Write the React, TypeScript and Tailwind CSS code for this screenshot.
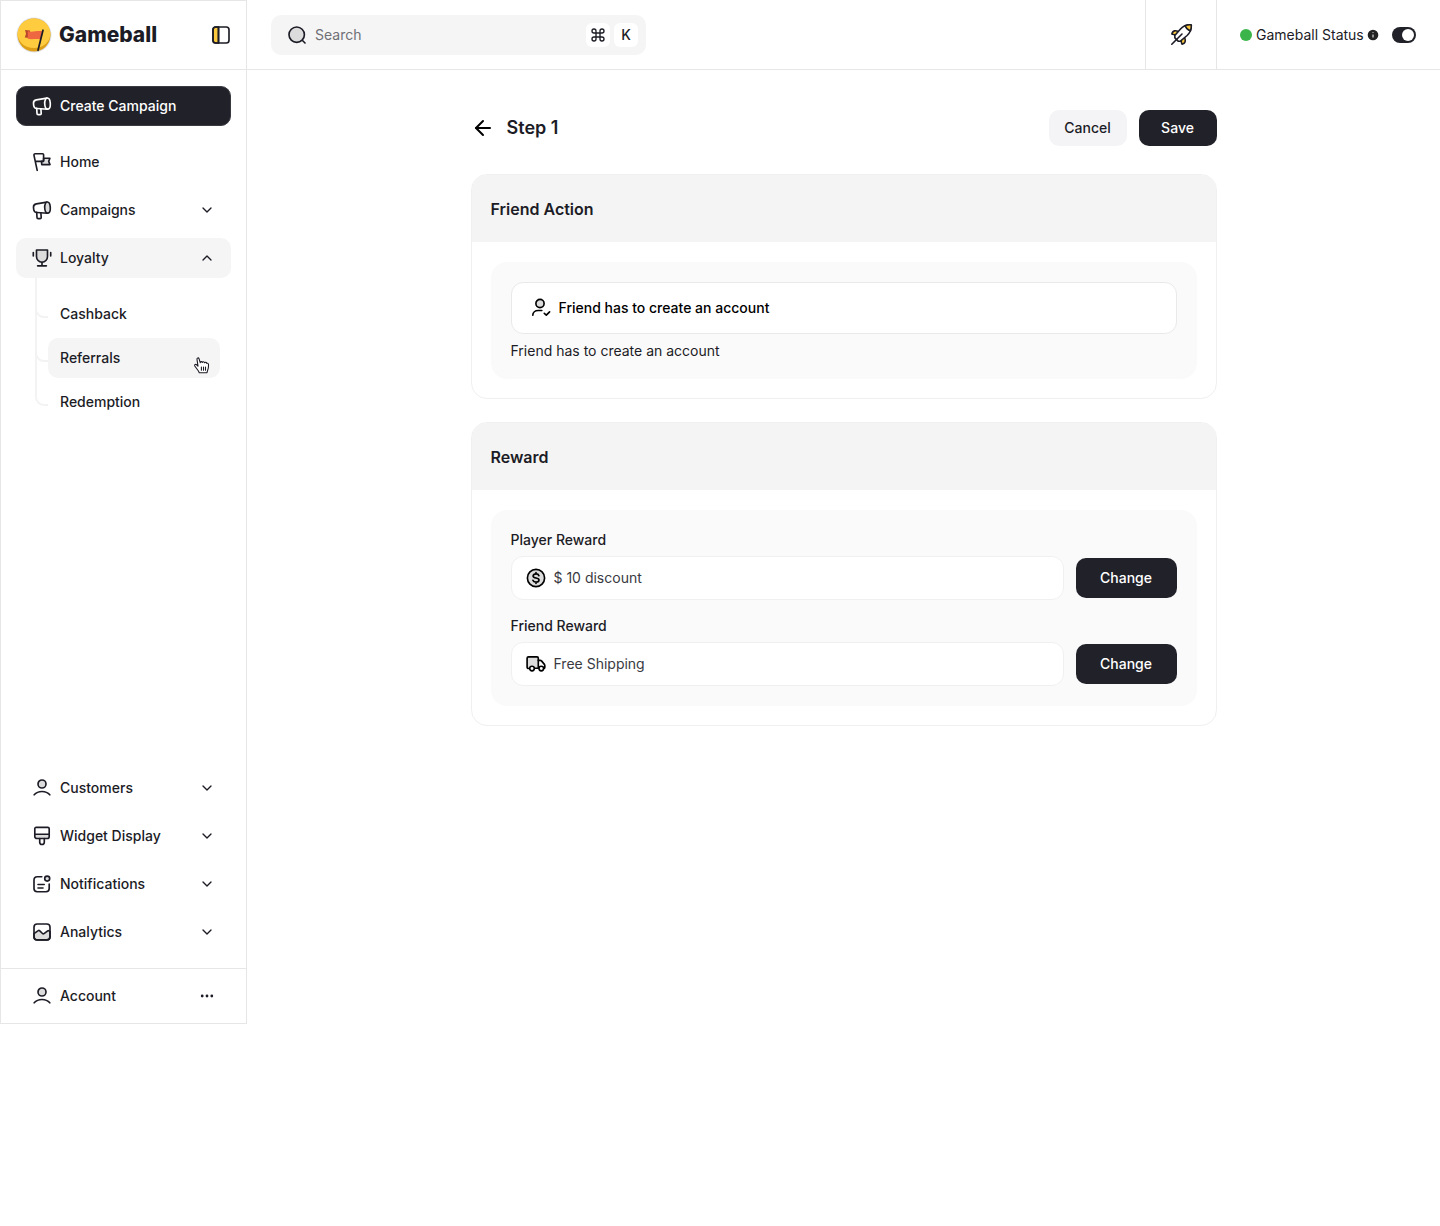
import type { ReactNode } from "react";
import { ArrowLeft, ChevronDown, ChevronUp, Command } from "lucide-react";

type IconProps = { children: ReactNode };

const Icon = ({ children }: IconProps) => (
  <svg
    viewBox="0 0 20 20"
    className="size-5 shrink-0"
    fill="none"
    stroke="currentColor"
    strokeWidth="1.65"
    strokeLinecap="round"
    strokeLinejoin="round"
    aria-hidden="true"
  >
    {children}
  </svg>
);

const MegaphoneIcon = ({ dark = false }: { dark?: boolean }) => (
  <Icon>
    <path d="M4.7 12.400l.3 5.100c0 .7.500 1.100 1.200 1.100h1.900c.7 0 1.100-.5 1.100-1.200l-.3-4.400" />
    <path d="M14.900 2.100L4.400 3.900C2.300 4.300 1.300 5.700 1.500 7.600l.2 1.900c.2 1.900 1.400 2.900 3.300 3l10.600.7" />
    <ellipse
      cx="15.500"
      cy="7.600"
      rx="2.800"
      ry="5.600"
      transform="rotate(-3 15.500 7.600)"
      fill={dark ? "none" : "#dcdcdd"}
    />
  </Icon>
);

const FlagIcon = () => (
  <Icon>
    <path d="M11.600 6.200h6.300l-1.200 3.200 1.300 3.200H9.800l-.4-3.300h2.200z" fill="#dcdcdd" />
    <path d="M5.200 18.300L2 3.400c-.2-1 .3-1.700 1.300-1.700h7.300c.6 0 1 .4 1 1v5.600c0 .6-.4 1-1 1H3.400" />
  </Icon>
);

const TrophyIcon = () => (
  <Icon>
    <path d="M4.500 2h11v6.400c0 3.300-2.400 5.800-5.500 5.800S4.500 11.700 4.500 8.400z" fill="#dcdcdd" />
    <path d="M10 14.200v3.600M5.600 17.800h8.800M1.300 4.500V8M18.700 4.500V8" />
  </Icon>
);

const UserIcon = () => (
  <Icon>
    <circle cx="10" cy="6" r="4" fill="#dcdcdd" />
    <path d="M2.200 16.800c1.900-2.200 4.700-3.300 7.800-3.300s5.900 1.100 7.800 3.300" />
  </Icon>
);

const BrushIcon = () => (
  <Icon>
    <path d="M2.800 8.200h14.400v2.200c0 1.200-.9 2.100-2 2.100H4.800c-1.100 0-2-.9-2-2.100z" fill="#dcdcdd" />
    <path d="M2.800 8.200V2.800c0-.9.500-1.400 1.400-1.400h11.600c.9 0 1.400.5 1.400 1.400v5.400" />
    <path d="M7.700 12.500v3.700a2.300 2.300 0 0 0 4.600 0v-3.700" />
  </Icon>
);

const NotificationIcon = () => (
  <Icon>
    <path d="M9.800 2.700H5.200C3.200 2.700 2 3.900 2 5.900v8.600c0 2 1.200 3.200 3.200 3.200h8.800c2 0 3.200-1.200 3.200-3.200V10" />
    <path d="M6 10.500h6.200M6 14h5" />
    <circle cx="15.200" cy="4.600" r="2.500" fill="#dcdcdd" />
  </Icon>
);

const ChartIcon = () => (
  <Icon>
    <path
      d="M2 11.600l4.200-3c.5-.4.900-.4 1.300 0l3 2.900c.5.500.9.500 1.500.1l3.700-2.800c.4-.3.800-.3 1.200 0l1.100.9v5c0 2-1.200 3.200-3.200 3.200H5.200C3.200 17.900 2 16.700 2 14.700z"
      fill="#dcdcdd"
    />
    <rect x="2" y="2" width="16" height="16" rx="3.200" />
  </Icon>
);

const UserCheckIcon = () => (
  <Icon>
    <circle cx="9" cy="5.500" r="4.100" fill="#dcdcdd" />
    <path d="M1.800 17.200c0-2.900 2.400-4.700 5.400-4.700h3.600M13.300 15.400l2 1.700 3.300-3.300" />
  </Icon>
);

const CoinIcon = () => (
  <Icon>
    <circle cx="10" cy="10" r="8.600" fill="#dcdcdd" />
    <path d="M12.900 7.600C12.500 6.500 11.500 5.900 10 5.900c-1.700 0-2.900.8-2.900 2.100 0 2.900 5.900 1.200 5.900 4 0 1.300-1.200 2.100-3 2.100-1.600 0-2.700-.6-3.100-1.800M10 4.600v1.300M10 14.100v1.300" />
  </Icon>
);

const TruckIcon = () => (
  <Icon>
    <path d="M2.600 14.500c-1 0-1.500-.5-1.500-1.500V4.300c0-1 .5-1.500 1.500-1.500H11c.9 0 1.300.5 1.300 1.400v10H8.500" fill="#dcdcdd" />
    <path d="M12.300 6.300h1.900c.6 0 1 .2 1.300.6l2.900 3.500c.3.400.4.700.4 1.200v1.900c0 .6-.3 1-.9 1" />
    <circle cx="6" cy="14.500" r="2.300" fill="#fff" />
    <circle cx="15.300" cy="14.500" r="2.300" fill="#fff" />
  </Icon>
);

const LogoMark = () => (
  <svg viewBox="0 0 36 36" className="size-9 shrink-0" aria-hidden="true">
    <circle cx="18" cy="18" r="17.500" fill="#dfe2e8" />
    <circle cx="18" cy="18" r="16.500" fill="#dd9f18" />
    <path d="M1.500 16.500C2 8 9 1.500 18 1.500S34 8 34.500 16.500C34.500 25 27 31 18 31S1.500 25 1.500 16.500z" fill="#ffcb3f" />
    <path d="M9 13l5 .6v7.400l-5.200-.5 1.200-3.700z" fill="#b9472c" />
    <path d="M11.800 14.300c5 1.200 9-.9 14.800 0l-2.300 8c-4.700-.9-8 .4-12.500-.5z" fill="#ee6741" />
    <path d="M27 13.200L22 33.300" stroke="#1c1c26" strokeWidth="1.700" strokeLinecap="round" />
  </svg>
);

const RocketIcon = () => (
  <svg
    viewBox="0 0 24 24"
    className="size-6"
    fill="none"
    stroke="#1c1c26"
    strokeWidth="1.600"
    strokeLinecap="round"
    strokeLinejoin="round"
    aria-hidden="true"
  >
    <path d="M8.800 8.200C6.300 7.200 4 7.600 3 10.300c-.2.600 0 .9.600 1l3 .7" fill="#fbc93d" />
    <path d="M15.800 15.200c1 2.500.6 4.800-2.100 5.800-.6.200-.9 0-1-.6l-.7-3" fill="#fbc93d" />
    <path d="M5.800 12.600L11.500 6c3-3.200 6-4.400 10.200-4.200.4 0 .6.200.6.600.2 4.200-1 7.100-4.200 10.100L11.400 18.200l-2.300-.1-3.200-3.200z" fill="#fff" />
    <path d="M16.200 2.700c1.700-.7 3.400-1 5.500-.9.400 0 .6.200.6.600.1 2.100-.2 3.800-.9 5.500-2.300-.8-4.400-2.900-5.200-5.200z" fill="#fbc93d" />
    <path d="M13 11L2.800 21.200" />
  </svg>
);

const PanelIcon = () => (
  <Icon>
    <path d="M7.500 2H4.700C3 2 2 3 2 4.700v10.600C2 17 3 18 4.700 18h2.800z" fill="#fbc93d" />
    <rect x="2" y="2" width="16" height="16" rx="2.700" />
    <path d="M7.500 2v16" />
  </Icon>
);

const HandCursor = () => (
  <svg
    viewBox="0 0 18 20"
    className="absolute right-[9px] top-[17px] h-5 w-[18px]"
    fill="#fff"
    stroke="#1c1c26"
    strokeWidth="1.100"
    strokeLinejoin="round"
    strokeLinecap="round"
    aria-hidden="true"
  >
    <path d="M6.300 17.800c-.4-1.600-1.600-2.900-2.600-4.200-.8-1.100-1.500-2-2-2.900-.4-.9.500-1.600 1.500-1.100.7.400 1.200 1 1.800 1.600L4 4.300c-.3-1.500 1.600-2 2.100-.5l1.200 4c-.1-1.400 1.700-1.600 2.100-.3.200-1.100 1.900-1.100 2.200.3.500-.8 2-.6 2.200.6.700-.5 1.700 0 1.700 1.200 0 2.400.2 3.900-.9 5.800-.4.800-.5 1.400-.6 2.400z" />
    <path d="M8.400 12v3.300M10.500 12v3.300M12.500 12v3.300" />
  </svg>
);

type NavItemProps = {
  icon: ReactNode;
  label: string;
  chevron?: "up" | "down";
  active?: boolean;
};

const NavItem = ({ icon, label, chevron, active }: NavItemProps) => (
  <button
    className={`flex h-10 w-full items-center gap-2 rounded-[10px] px-4 text-left ${active ? "bg-[#f5f5f5]" : ""}`}
  >
    {icon}
    <span className="flex-1">{label}</span>
    {chevron === "down" && <ChevronDown className="size-4" />}
    {chevron === "up" && <ChevronUp className="size-4" />}
  </button>
);

const Sidebar = () => (
  <aside className="flex min-h-256 w-[247px] shrink-0 flex-col border border-[#e6e6e6]">
    <div className="flex h-[69px] items-center border-b border-[#e6e6e6] px-[15px]">
      <a href="#" className="flex flex-1 items-center gap-[7px]">
        <LogoMark />
        <span className="text-[21px] font-extrabold">Gameball</span>
      </a>
      <button aria-label="Collapse sidebar">
        <PanelIcon />
      </button>
    </div>

    <nav className="flex flex-1 flex-col px-[15px] py-4">
      <button className="mb-4 flex h-10 items-center gap-2 rounded-[10px] border border-[#3a3a42] bg-[#212129] px-[15px] text-white">
        <MegaphoneIcon dark />
        Create Campaign
      </button>
      <div className="flex flex-col gap-2">
        <NavItem icon={<FlagIcon />} label="Home" />
        <NavItem icon={<MegaphoneIcon />} label="Campaigns" chevron="down" />
        <NavItem icon={<TrophyIcon />} label="Loyalty" chevron="up" active />
      </div>
      <div className="flex pl-[19px] pr-[11px]">
        <svg
          viewBox="0 0 13 128"
          className="h-32 w-[13px]"
          fill="none"
          stroke="#f3f3f3"
          strokeWidth="2"
          aria-hidden="true"
        >
          <path d="M1 0v119a8 8 0 0 0 8 8h4M1 32a8 8 0 0 0 8 7h4M1 76a8 8 0 0 0 8 7h4" />
        </svg>
        <ul className="flex flex-1 flex-col gap-1 pt-4">
          <li>
            <a href="#" className="flex h-10 items-center rounded-[10px] px-3">
              Cashback
            </a>
          </li>
          <li className="relative">
            <a href="#" className="flex h-10 items-center rounded-[10px] bg-[#f5f5f5] px-3">
              Referrals
            </a>
            <HandCursor />
          </li>
          <li>
            <a href="#" className="flex h-10 items-center rounded-[10px] px-3">
              Redemption
            </a>
          </li>
        </ul>
      </div>
      <div className="mt-auto flex flex-col gap-2">
        <NavItem icon={<UserIcon />} label="Customers" chevron="down" />
        <NavItem icon={<BrushIcon />} label="Widget Display" chevron="down" />
        <NavItem icon={<NotificationIcon />} label="Notifications" chevron="down" />
        <NavItem icon={<ChartIcon />} label="Analytics" chevron="down" />
      </div>
    </nav>

    <div className="border-t border-[#e6e6e6] px-[15px] py-[7px]">
      <button className="flex h-10 w-full items-center gap-2 px-4 text-left">
        <UserIcon />
        <span className="flex-1">Account</span>
        <svg viewBox="0 0 16 16" className="size-4" fill="currentColor" aria-hidden="true">
          <circle cx="3.200" cy="8" r="1.400" />
          <circle cx="8" cy="8" r="1.400" />
          <circle cx="12.800" cy="8" r="1.400" />
        </svg>
      </button>
    </div>
  </aside>
);

const Topbar = () => (
  <header className="flex h-[70px] border-b border-[#e6e6e6]">
    <div className="flex flex-1 items-center px-6">
      <label className="flex h-10 w-full max-w-[375px] items-center gap-2 rounded-[10px] bg-[#f5f5f5] pl-4 pr-2">
        <Icon>
          <circle cx="9.700" cy="9.700" r="7.700" fill="#dcdcdd" />
          <path d="M15.500 15.500l2.500 2.500" />
        </Icon>
        <input
          type="text"
          placeholder="Search"
          aria-label="Search"
          className="min-w-0 flex-1 bg-transparent font-normal outline-none placeholder:text-[#6f6f75]"
        />
        <span className="flex gap-1">
          <kbd className="flex size-6 items-center justify-center rounded-md bg-white">
            <Command className="size-4" />
          </kbd>
          <kbd className="flex size-6 items-center justify-center rounded-md bg-white font-[Inter]">K</kbd>
        </span>
      </label>
    </div>
    <button
      aria-label="What's new"
      className="flex w-[72px] items-center justify-center border-x border-[#e6e6e6]"
    >
      <RocketIcon />
    </button>
    <div className="flex w-[223px] items-center pl-[23px] pr-6">
      <span className="mr-1 size-3 rounded-full bg-[#3bb54a]" />
      <label htmlFor="status" className="font-normal">
        Gameball Status
      </label>
      <svg viewBox="0 0 12 12" className="ml-auto mr-[13px] size-3" aria-hidden="true">
        <circle cx="6" cy="6" r="5.300" fill="#222" />
        <path d="M6 5.400v3M6 3.200v.8" stroke="#ccc" strokeWidth="1.300" />
      </svg>
      <input
        id="status"
        type="checkbox"
        role="switch"
        defaultChecked
        className="flex h-4 w-6 appearance-none items-center rounded-full bg-[#9a9aa0] px-0.5 before:size-3 before:rounded-full before:bg-white checked:justify-end checked:bg-[#212129]"
      />
    </div>
  </header>
);

type CardProps = { title: string; children: ReactNode };

const Card = ({ title, children }: CardProps) => (
  <section className="overflow-hidden rounded-2xl border border-[#f0f0f0]">
    <h2 className="flex h-[67px] items-center bg-[#f4f4f4] px-[19px] text-[16px] font-semibold leading-5">{title}</h2>
    <div className="px-[19px] pb-[19px] pt-5">
      <div className="rounded-2xl bg-[#fafafa] p-5">{children}</div>
    </div>
  </section>
);

type RewardRowProps = { id: string; label: string; value: string; icon: ReactNode };

const RewardRow = ({ id, label, value, icon }: RewardRowProps) => (
  <div>
    <label htmlFor={id} className="mb-1.5 block">
      {label}
    </label>
    <div className="flex items-center gap-3">
      <div className="flex h-11 flex-1 items-center gap-2 rounded-xl border border-[#f0f0f0] bg-white px-[14px] text-black">
        {icon}
        <input
          id={id}
          type="text"
          readOnly
          defaultValue={value}
          className="min-w-0 flex-1 font-normal text-[#3a3a42] outline-none"
        />
      </div>
      <button className="h-10 w-[101px] rounded-[10px] bg-[#212129] text-white">Change</button>
    </div>
  </div>
);

const App = () => (
  <div className="flex min-h-screen items-start bg-white font-[Inter,sans-serif] text-[14px] font-medium leading-5 text-[#1c1c26]">
    <Sidebar />
    <div className="min-w-0 flex-1">
      <Topbar />
      <main className="mx-auto w-full max-w-[746px] pb-10 pt-10">
        <div className="mb-7 flex items-center gap-3">
          <button aria-label="Back" className="text-black">
            <ArrowLeft className="size-6" />
          </button>
          <h1 className="flex-1 text-[18px] font-semibold">Step 1</h1>
          <button className="h-9 w-[78px] rounded-[10px] bg-[#f4f4f6]">Cancel</button>
          <button className="h-9 w-[78px] rounded-[10px] bg-[#212129] text-white">Save</button>
        </div>

        <div className="flex flex-col gap-[23px]">
          <Card title="Friend Action">
            <div className="flex h-[52px] items-center gap-2 rounded-xl border border-[#e9e9e9] bg-white px-[19px] text-black">
              <UserCheckIcon />
              <input
                type="text"
                readOnly
                aria-label="Friend action"
                defaultValue="Friend has to create an account"
                className="min-w-0 flex-1 outline-none"
              />
            </div>
            <p className="mt-2 font-normal leading-[17px]">Friend has to create an account</p>
          </Card>

          <Card title="Reward">
            <div className="flex flex-col gap-4">
              <RewardRow id="player-reward" label="Player Reward" value="$ 10 discount" icon={<CoinIcon />} />
              <RewardRow id="friend-reward" label="Friend Reward" value="Free Shipping" icon={<TruckIcon />} />
            </div>
          </Card>
        </div>
      </main>
    </div>
  </div>
);

export default App;
